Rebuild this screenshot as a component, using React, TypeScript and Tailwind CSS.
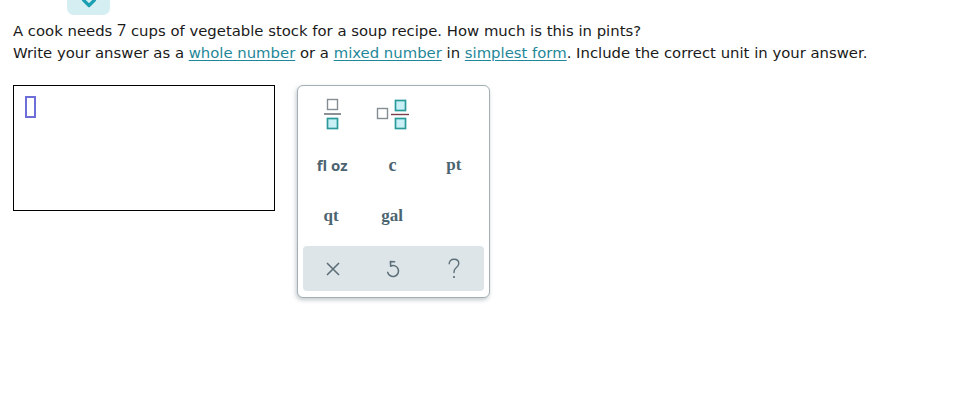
import React from "react";

function FracIcon() {
  return (
    <svg width="20" height="34" viewBox="0 0 20 34">
      <rect x="4.5" y="1.5" width="10" height="10" fill="none" stroke="#838d92" strokeWidth="1.4" />
      <line x1="1" y1="16" x2="18" y2="16" stroke="#5a6268" strokeWidth="1.4" />
      <rect x="4.5" y="20.5" width="10" height="10" fill="#c9f0f6" stroke="#2a9a9a" strokeWidth="1.7" />
    </svg>
  );
}

function MixedIcon() {
  return (
    <svg width="36" height="34" viewBox="0 0 36 34">
      <rect x="1.5" y="10.5" width="10" height="10" fill="none" stroke="#838d92" strokeWidth="1.4" />
      <rect x="19.5" y="2.5" width="10" height="10" fill="#c9f0f6" stroke="#2a9a9a" strokeWidth="1.7" />
      <line x1="15" y1="16.5" x2="33" y2="16.5" stroke="#7a3f4a" strokeWidth="1.4" />
      <rect x="19.5" y="20.5" width="10" height="10" fill="#c9f0f6" stroke="#2a9a9a" strokeWidth="1.7" />
    </svg>
  );
}

function XIcon() {
  return (
    <svg width="16" height="16" viewBox="0 0 16 16">
      <path d="M2 2 L14 14 M14 2 L2 14" stroke="#5d6f78" strokeWidth="1.6" fill="none" />
    </svg>
  );
}

function UndoIcon() {
  return (
    <svg width="18" height="20" viewBox="0 0 18 20">
      <path d="M6.7 7 A5.5 5.5 0 1 1 3.7 13.4" stroke="#5d6f78" strokeWidth="1.6" fill="none" strokeLinecap="round" />
      <path d="M10.6 2.8 L6.4 2.6 L6.7 7.1" stroke="#5d6f78" strokeWidth="1.6" fill="none" strokeLinecap="round" strokeLinejoin="round" />
    </svg>
  );
}

function QIcon() {
  return (
    <svg width="14" height="22" viewBox="0 0 14 22">
      <path d="M2.2 5.8 C2.2 3 4.2 1.3 7 1.3 C9.8 1.3 11.8 3 11.8 5.6 C11.8 8 10 9.2 8.6 10.3 C7.4 11.2 7 12.2 7 14.6" stroke="#5d6f78" strokeWidth="1.4" fill="none" strokeLinecap="round" />
      <circle cx="7" cy="19" r="1.1" fill="#5d6f78" />
    </svg>
  );
}

export default function App() {
  const serif = { fontFamily: '"Liberation Serif", "DejaVu Serif", serif' };
  return (
    <div className="w-[977px] h-[415px] bg-white overflow-hidden" style={{ fontFamily: '"DejaVu Sans", Verdana, sans-serif' }}>
      <div className="pl-[67px] h-[15px]">
        <div className="w-[43px] h-[15px] rounded-b-[7px] bg-[#d4eef2] flex justify-center items-start overflow-hidden">
          <svg width="16" height="9" viewBox="0 0 16 9">
            <path d="M2.5 0 L8 5.5 L13.5 0" stroke="#1a9fb3" strokeWidth="3.2" fill="none" strokeLinecap="round" strokeLinejoin="round" />
          </svg>
        </div>
      </div>
      <div className="pt-[4px] pl-[13px] text-[14.85px] leading-[22px] text-[#1a1a1a]">
        <div>
          A cook needs <span style={{ fontFamily: '"Open Sans", sans-serif' }} className="text-[16px]">7</span> cups of vegetable stock for a soup recipe. How much is this in pints?
        </div>
        <div>
          Write your answer as a{" "}
          <span className="text-[#1f8799] underline underline-offset-2">whole number</span> or a{" "}
          <span className="text-[#1f8799] underline underline-offset-2">mixed number</span> in{" "}
          <span className="text-[#1f8799] underline underline-offset-2">simplest form</span>. Include the correct unit in your answer.
        </div>
      </div>
      <div className="mt-[21px] flex items-start pl-[13px] gap-[22px]">
        <div className="w-[262px] h-[126px] border border-black pl-[11px] pt-[10px]">
          <div className="w-[11px] h-[22px] border-2 border-[#6e6ed8]" />
        </div>
        <div className="w-[193px] h-[213px] border border-[#a3b0b6] rounded-[6px] shadow-[-1px_2px_4px_rgba(80,100,110,0.35)] px-[5px] pt-[4px] pb-[5px] flex flex-col bg-white">
          <div className="grid grid-cols-3 grid-rows-[50px_50px_51px]">
            <div className="flex items-center justify-center"><FracIcon /></div>
            <div className="flex items-center justify-center pl-[2px]"><MixedIcon /></div>
            <div />
            <div className="flex items-center justify-center text-[15px] font-bold text-[#4b6470] pr-[2px]" style={{ fontFamily: '"Open Sans", sans-serif' }}>fl oz</div>
            <div className="flex items-center justify-center text-[18px] font-bold text-[#4b6470] pr-[2px]" style={serif}>c</div>
            <div className="flex items-center justify-center text-[17px] font-bold text-[#4b6470]" style={serif}>pt</div>
            <div className="flex items-center justify-center text-[17px] font-bold text-[#4b6470] pr-[4px]" style={serif}>qt</div>
            <div className="flex items-center justify-center text-[17px] font-bold text-[#4b6470] pr-[3px]" style={serif}>gal</div>
            <div />
          </div>
          <div className="mt-[5px] h-[45px] rounded-[4px] bg-[#dde5e8] grid grid-cols-3">
            <div className="flex items-center justify-center"><XIcon /></div>
            <div className="flex items-center justify-center"><UndoIcon /></div>
            <div className="flex items-center justify-center"><QIcon /></div>
          </div>
        </div>
      </div>
    </div>
  );
}
